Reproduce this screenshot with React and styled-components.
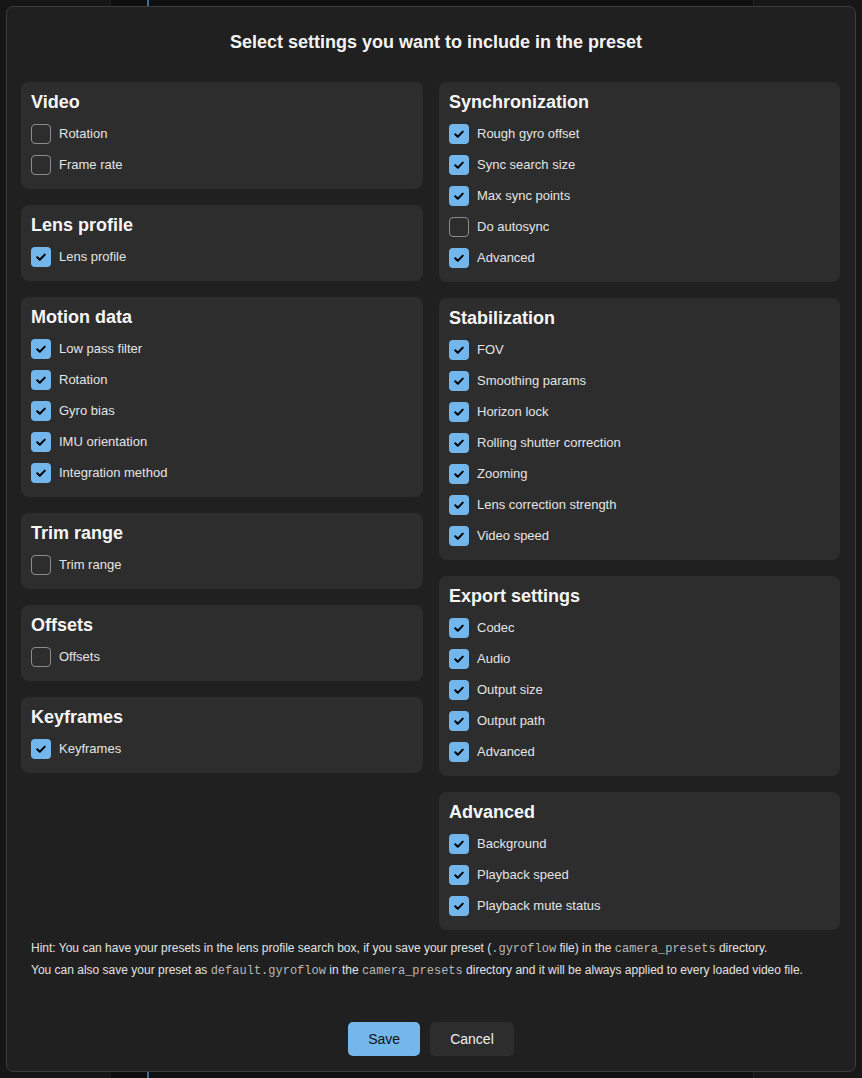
import React from "react";
import styled, { createGlobalStyle } from "styled-components";

const Global = createGlobalStyle`
  html, body { margin: 0; padding: 0; background: #111111; }
  body { font-family: "Liberation Sans", Arial, sans-serif; }
  #root { width: 862px; height: 1078px; position: relative; overflow: hidden; }
`;

const Shell = styled.div`
  display: flex;
  width: 862px;
  height: 1078px;
  background: #101010;
`;

const LeftPane = styled.div`
  width: 110px;
  background: #161616;
  border-right: 1px solid #1f1f1f;
`;

const Timeline = styled.div`
  width: 36px;
  background: #0d0d0d;
  border-right: 2px solid #3f6f99;
`;

const CenterPane = styled.div`
  flex: 1;
  background: #0f0f0f;
`;

const RightPane = styled.div`
  width: 108px;
  background: #171717;
  border-left: 1px solid #262626;
`;

const Overlay = styled.div`
  position: absolute;
  inset: 0;
  padding: 6px;
  box-sizing: border-box;
`;

const Dialog = styled.div`
  box-sizing: border-box;
  width: 850px;
  height: 1066px;
  background: #202020;
  border: 1px solid #3d3d3d;
  border-radius: 7px;
  padding: 0 14px;
  display: flex;
  flex-direction: column;
  color: #e6e6e6;
`;

const Title = styled.h1`
  margin: 0;
  height: 75px;
  line-height: 70px;
  padding-left: 10px;
  text-align: center;
  font-size: 18px;
  font-weight: bold;
  color: #f4f4f4;
`;

const Columns = styled.div`
  display: grid;
  grid-template-columns: 402px 401px;
  column-gap: 16px;
  align-items: start;
`;

const Column = styled.div`
  display: flex;
  flex-direction: column;
  gap: 16px;
`;

const Panel = styled.section`
  background: #2d2d2d;
  border-radius: 8px;
  padding: 7px 10px 9px;
`;

const PanelTitle = styled.h2`
  margin: 0 0 3px;
  height: 26px;
  line-height: 26px;
  font-size: 18px;
  font-weight: bold;
  color: #f6f6f6;
`;

const Item = styled.label`
  display: flex;
  align-items: center;
  gap: 8px;
  height: 31px;
  font-size: 13px;
  color: #e4e4e4;
`;

const Box = styled.span`
  box-sizing: border-box;
  width: 20px;
  height: 20px;
  border-radius: 4px;
  display: inline-flex;
  align-items: center;
  justify-content: center;
  background: ${(p) => (p.$checked ? "#72b6ec" : "transparent")};
  border: ${(p) => (p.$checked ? "none" : "1.5px solid #8c8c8c")};
`;

const Hint = styled.div`
  margin-top: 8px;
  font-size: 12px;
  line-height: 21px;
  color: #e2e2e2;
  padding-left: 10px;
`;

const Code = styled.code`
  font-family: "Liberation Mono", "Courier New", monospace;
  font-size: 12px;
  color: #b8b8b8;
`;

const Buttons = styled.div`
  margin-top: 40px;
  display: flex;
  justify-content: center;
  gap: 10px;
`;

const Button = styled.button`
  height: 34px;
  padding: 0 20px;
  border: none;
  border-radius: 5px;
  font-family: "Liberation Sans", Arial, sans-serif;
  font-size: 14px;
  background: ${(p) => (p.$primary ? "#74b7eb" : "#2d2d2d")};
  color: ${(p) => (p.$primary ? "#111111" : "#f0f0f0")};
`;

const Check = () => (
  <svg width="12" height="12" viewBox="0 0 12 12">
    <path d="M2.2 6.3 L4.8 8.8 L9.8 3.6" fill="none" stroke="#000" strokeWidth="2" strokeLinecap="round" strokeLinejoin="round" />
  </svg>
);

const CheckItem = ({ label, checked }) => (
  <Item>
    <Box $checked={checked}>{checked && <Check />}</Box>
    {label}
  </Item>
);

const Section = ({ title, items }) => (
  <Panel>
    <PanelTitle>{title}</PanelTitle>
    {items.map(([label, checked]) => (
      <CheckItem key={label} label={label} checked={checked} />
    ))}
  </Panel>
);

const left = [
  ["Video", [["Rotation", false], ["Frame rate", false]]],
  ["Lens profile", [["Lens profile", true]]],
  ["Motion data", [["Low pass filter", true], ["Rotation", true], ["Gyro bias", true], ["IMU orientation", true], ["Integration method", true]]],
  ["Trim range", [["Trim range", false]]],
  ["Offsets", [["Offsets", false]]],
  ["Keyframes", [["Keyframes", true]]],
];

const right = [
  ["Synchronization", [["Rough gyro offset", true], ["Sync search size", true], ["Max sync points", true], ["Do autosync", false], ["Advanced", true]]],
  ["Stabilization", [["FOV", true], ["Smoothing params", true], ["Horizon lock", true], ["Rolling shutter correction", true], ["Zooming", true], ["Lens correction strength", true], ["Video speed", true]]],
  ["Export settings", [["Codec", true], ["Audio", true], ["Output size", true], ["Output path", true], ["Advanced", true]]],
  ["Advanced", [["Background", true], ["Playback speed", true], ["Playback mute status", true]]],
];

export default function App() {
  return (
    <>
      <Global />
      <Shell>
        <LeftPane />
        <Timeline />
        <CenterPane />
        <RightPane />
      </Shell>
      <Overlay>
        <Dialog>
          <Title>Select settings you want to include in the preset</Title>
          <Columns>
            <Column>
              {left.map(([t, items]) => (
                <Section key={t} title={t} items={items} />
              ))}
            </Column>
            <Column>
              {right.map(([t, items]) => (
                <Section key={t} title={t} items={items} />
              ))}
            </Column>
          </Columns>
          <Hint>
            <div>
              Hint: You can have your presets in the lens profile search box, if you save your preset (<Code>.gyroflow</Code> file) in the <Code>camera_presets</Code> directory.
            </div>
            <div>
              You can also save your preset as <Code>default.gyroflow</Code> in the <Code>camera_presets</Code> directory and it will be always applied to every loaded video file.
            </div>
          </Hint>
          <Buttons>
            <Button $primary>Save</Button>
            <Button>Cancel</Button>
          </Buttons>
        </Dialog>
      </Overlay>
    </>
  );
}
